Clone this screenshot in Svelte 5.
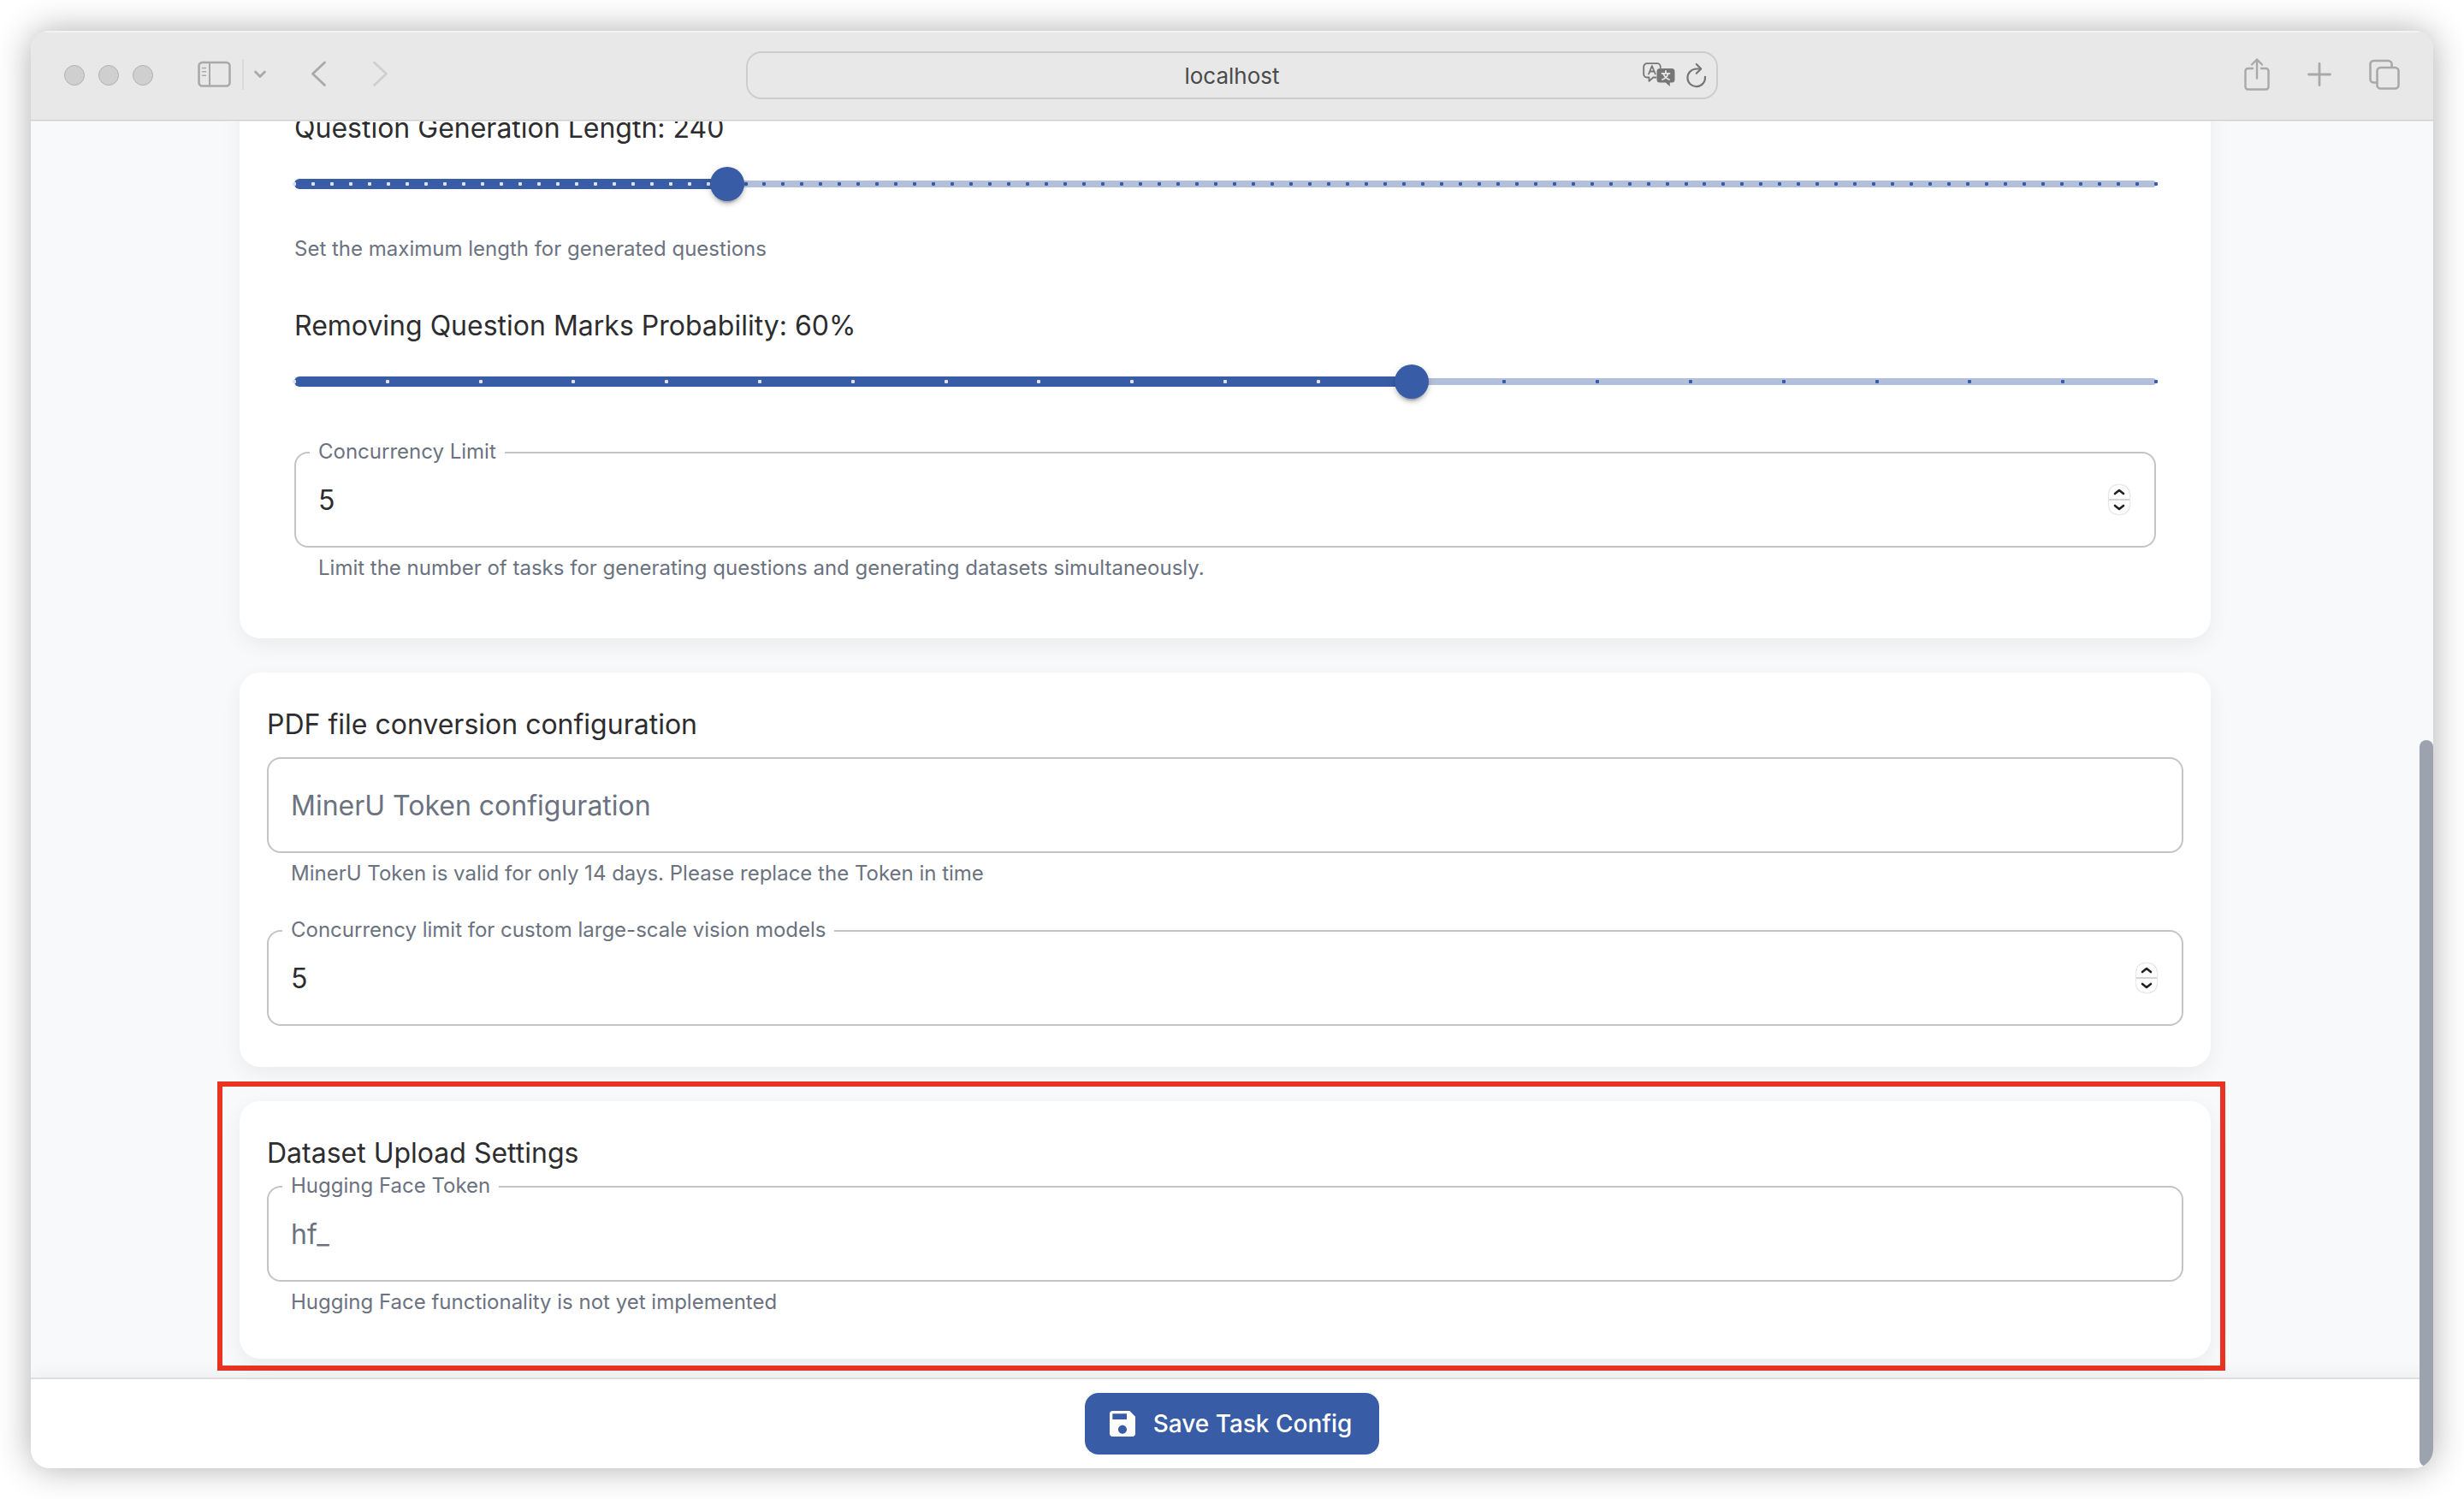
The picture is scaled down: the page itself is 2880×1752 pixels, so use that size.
<script lang="ts">
  type Mark = { at: number; active: boolean };

  let questionLength: number = 240;
  let maskProbability: number = 60;
  let concurrencyLimit: number = 5;
  let visionConcurrencyLimit: number = 5;
  let minerUToken: string = "";
  let huggingfaceToken: string = "";

  // Position of a value on its slider, in percent
  function percent(value: number, min: number, max: number) {
    return ((value - min) / (max - min)) * 100;
  }

  // One mark for every step of the slider
  function buildMarks(value: number, min: number, max: number, step: number) {
    const marks: Mark[] = [];
    for (let v = min; v <= max; v += step) {
      marks.push({ at: percent(v, min, max), active: v <= value });
    }
    return marks;
  }

  $: sliders = [
    {
      id: "question-length",
      title: `Question Generation Length: ${questionLength}`,
      value: questionLength,
      min: 10,
      max: 1000,
      step: 10,
      help: "Set the maximum length for generated questions",
      update: (v: number) => (questionLength = v),
    },
    {
      id: "mask-probability",
      title: `Removing Question Marks Probability: ${maskProbability}%`,
      value: maskProbability,
      min: 0,
      max: 100,
      step: 5,
      help: "",
      update: (v: number) => (maskProbability = v),
    },
  ];
</script>

<div class="desktop">
  <div class="window">
    <!-- Browser Toolbar -->
    <header class="toolbar">
      <div class="toolbar-left">
        <div class="lights">
          <span></span>
          <span></span>
          <span></span>
        </div>
        <div class="sidebar-group">
          <button class="tool" aria-label="Show sidebar">
            <svg width="40" height="32" viewBox="0 0 40 32" fill="none" stroke="currentColor">
              <rect x="1.5" y="2" width="36" height="27.5" rx="4" stroke-width="2.6" />
              <path d="M14 2v27.500" stroke-width="2" />
              <path d="M5.500 8.500h4M5.500 12.800h4M5.500 17.200h4" stroke-width="1.600" stroke-linecap="round" />
            </svg>
          </button>
          <span class="divider"></span>
          <button class="tool" aria-label="Sidebar options">
            <svg width="14" height="12" viewBox="0 0 14 12" fill="none" stroke="currentColor" stroke-width="2.800" stroke-linecap="round" stroke-linejoin="round">
              <path d="M1.600 3l5.400 5.500L12.400 3" />
            </svg>
          </button>
        </div>
        <div class="history">
          <button class="tool" aria-label="Back">
            <svg width="20" height="32" viewBox="0 0 20 32" fill="none" stroke="currentColor" stroke-width="2.800" stroke-linecap="round" stroke-linejoin="round">
              <path d="M16.500 2L2.500 15.200l14 13.200" />
            </svg>
          </button>
          <button class="tool disabled" aria-label="Forward" disabled>
            <svg width="20" height="32" viewBox="0 0 20 32" fill="none" stroke="currentColor" stroke-width="2.800" stroke-linecap="round" stroke-linejoin="round">
              <path d="M2.500 2l14 13.200-14 13.200" />
            </svg>
          </button>
        </div>
      </div>

      <div class="address">
        <input type="text" value="localhost" aria-label="Address" />
        <div class="address-actions">
          <button class="tool dark" aria-label="Translate">
            <svg width="38" height="30" viewBox="0 0 38 30" fill="none" stroke="currentColor" stroke-width="1.800" stroke-linecap="round" stroke-linejoin="round">
              <path d="M15.500 17.500h-3.200L7.500 21.800v-4.300H5a3.800 3.800 0 0 1-3.800-3.800V5A3.800 3.800 0 0 1 5 1.200h12A3.800 3.800 0 0 1 20.800 5v1" />
              <path d="M7 13.500L10.900 4l3.900 9.500M8.300 10.500h5.200" />
              <path d="M20 7h14a3.500 3.500 0 0 1 3.500 3.500V20a3.500 3.500 0 0 1-3.500 3.500h-2.200V28l-5-4.500H20a3.500 3.500 0 0 1-3.500-3.500v-9.500A3.500 3.500 0 0 1 20 7z" fill="currentColor" stroke="none" />
              <path d="M27 9.800v2M22.500 12.800h9M24.200 13.200c1.200 3.200 3.500 5.400 6.800 6.800M29.800 13.200c-1.200 3.200-3.500 5.400-6.800 6.800" stroke="#e8e8e8" stroke-width="1.800" />
            </svg>
          </button>
          <button class="tool dark" aria-label="Reload">
            <svg width="24" height="30" viewBox="0 0 24 30" fill="none" stroke="currentColor" stroke-width="2.200" stroke-linecap="round" stroke-linejoin="round">
              <path d="M22 16.800A10.300 10.300 0 1 1 11.700 7.500H17" />
              <path d="M11.800 2l5.400 5.500-5.400 5.200" />
            </svg>
          </button>
        </div>
      </div>

      <div class="toolbar-right">
        <button class="tool" aria-label="Share">
          <svg width="30" height="40" viewBox="0 0 30 40" fill="none" stroke="currentColor" stroke-width="2.400" stroke-linecap="round" stroke-linejoin="round">
            <path d="M10 13H4.500A3 3 0 0 0 1.500 16v18.500a3 3 0 0 0 3 3h21a3 3 0 0 0 3-3V16a3 3 0 0 0-3-3H20" />
            <path d="M15 24.500V2.500M9 8.500l6-6 6 6" />
          </svg>
        </button>
        <button class="tool" aria-label="New tab">
          <svg width="28" height="28" viewBox="0 0 28 28" fill="none" stroke="currentColor" stroke-width="2.800" stroke-linecap="round">
            <path d="M14 1.500v25M1.500 14h25" />
          </svg>
        </button>
        <button class="tool" aria-label="Tab overview">
          <svg width="36" height="36" viewBox="0 0 36 36" fill="none" stroke="currentColor" stroke-width="2.600" stroke-linejoin="round">
            <rect x="9.500" y="10" width="25" height="24.500" rx="4" />
            <path d="M9.500 27.500H5.500a4 4 0 0 1-4-4V6a4 4 0 0 1 4-4h17a4 4 0 0 1 4 4v4" />
          </svg>
        </button>
      </div>
    </header>

    <!-- Task Settings -->
    <main class="page">
      <div class="container">
        <section class="card split">
          {#each sliders as s (s.id)}
            <div class="setting">
              <label class="slider-title" for={s.id}>{s.title}</label>
              <div class="slider">
                <div class="rail"></div>
                <div class="track" style="width: {percent(s.value, s.min, s.max)}%"></div>
                {#each buildMarks(s.value, s.min, s.max, s.step) as mark}
                  <span class="mark" class:active={mark.active} style="left: {mark.at}%"></span>
                {/each}
                <input
                  id={s.id}
                  type="range"
                  min={s.min}
                  max={s.max}
                  step={s.step}
                  value={s.value}
                  on:input={(e) => s.update(Number(e.currentTarget.value))}
                />
              </div>
              {#if s.help}
                <p class="help slider-help">{s.help}</p>
              {/if}
            </div>
          {/each}

          <div class="field">
            <div class="outline">
              <label for="concurrency">Concurrency Limit</label>
              <input id="concurrency" type="number" bind:value={concurrencyLimit} />
              <div class="stepper">
                <button aria-label="Increase" on:click={() => (concurrencyLimit += 1)}>
                  <svg width="14" height="8" viewBox="0 0 14 8"><path d="M2 6l5-4 5 4" /></svg>
                </button>
                <button aria-label="Decrease" on:click={() => (concurrencyLimit -= 1)}>
                  <svg width="14" height="8" viewBox="0 0 14 8"><path d="M2 2l5 4 5-4" /></svg>
                </button>
              </div>
            </div>
            <p class="help">
              Limit the number of tasks for generating questions and generating datasets simultaneously.
            </p>
          </div>
        </section>

        <section class="card">
          <h2>PDF file conversion configuration</h2>
          <div class="field">
            <div class="outline">
              <input
                type="text"
                placeholder="MinerU Token configuration"
                aria-label="MinerU Token configuration"
                bind:value={minerUToken}
              />
            </div>
            <p class="help">MinerU Token is valid for only 14 days. Please replace the Token in time</p>
          </div>
          <div class="field">
            <div class="outline">
              <label for="vision-concurrency">Concurrency limit for custom large-scale vision models</label>
              <input id="vision-concurrency" type="number" bind:value={visionConcurrencyLimit} />
              <div class="stepper">
                <button aria-label="Increase" on:click={() => (visionConcurrencyLimit += 1)}>
                  <svg width="14" height="8" viewBox="0 0 14 8"><path d="M2 6l5-4 5 4" /></svg>
                </button>
                <button aria-label="Decrease" on:click={() => (visionConcurrencyLimit -= 1)}>
                  <svg width="14" height="8" viewBox="0 0 14 8"><path d="M2 2l5 4 5-4" /></svg>
                </button>
              </div>
            </div>
          </div>
        </section>

        <section class="card">
          <h2>Dataset Upload Settings</h2>
          <div class="field">
            <div class="outline">
              <label for="hf-token">Hugging Face Token</label>
              <input id="hf-token" type="text" placeholder="hf_" bind:value={huggingfaceToken} />
            </div>
            <p class="help">Hugging Face functionality is not yet implemented</p>
          </div>
          <div class="highlight"></div>
        </section>
      </div>
    </main>

    <!-- Save Bar -->
    <footer class="save-bar">
      <button class="save">
        <svg width="40" height="40" viewBox="0 0 24 24" fill="currentColor">
          <path d="M17 3H5c-1.110 0-2 .9-2 2v14c0 1.100.89 2 2 2h14c1.100 0 2-.9 2-2V7zm-5 16c-1.660 0-3-1.340-3-3s1.340-3 3-3 3 1.340 3 3-1.340 3-3 3m3-10H5V5h10z" />
        </svg>
        Save Task Config
      </button>
    </footer>

    <div class="scrollbar"><div class="scroll-thumb"></div></div>
  </div>
</div>

<style>
  :global(body) {
    margin: 0;
    background: #fff;
  }

  .desktop,
  .desktop * {
    box-sizing: border-box;
  }

  .desktop {
    height: 100vh;
    padding: 36px;
    font-family: Inter, "Liberation Sans", sans-serif;
    color: #2d2d2f;
  }

  .window {
    height: 100%;
    display: grid;
    grid-template-columns: minmax(0, 1fr) 16px;
    grid-template-rows: auto minmax(0, 1fr) auto;
    border-radius: 22px;
    overflow: hidden;
    background: #f8f9fb;
    box-shadow: 0 0 40px rgba(0, 0, 0, 0.32);
  }

  button {
    font-family: inherit;
    border: none;
    padding: 0;
    cursor: pointer;
  }

  svg {
    display: block;
  }

  /* Toolbar */
  .toolbar {
    grid-column: 1 / 3;
    grid-row: 1;
    z-index: 2;
    display: grid;
    grid-template-columns: 1fr minmax(400px, 1136px) 1fr;
    align-items: center;
    padding: 24px 39px;
    background: #e8e8e8;
    border-bottom: 1px solid #cfcfcf;
    box-shadow: inset 0 2px 0 #f3f3f3, 0 1px 0 #e9e9ea;
  }

  .toolbar-left,
  .toolbar-right,
  .lights,
  .sidebar-group,
  .history,
  .address-actions {
    display: flex;
    align-items: center;
  }

  .toolbar-left {
    gap: 52px;
  }

  .toolbar-right {
    justify-content: flex-end;
    gap: 44px;
  }

  .sidebar-group,
  .history,
  .toolbar-right {
    padding-bottom: 2px;
  }

  .lights {
    gap: 16px;
  }

  .lights span {
    width: 24px;
    height: 24px;
    border-radius: 50%;
    background: #cfcfcf;
    border: 1px solid #b2b2b2;
  }

  .sidebar-group {
    gap: 12px;
  }

  .history {
    gap: 52px;
  }

  .divider {
    width: 2px;
    height: 36px;
    background: #dadada;
  }

  .tool {
    background: none;
    color: #a9a9a9;
  }

  .tool.disabled {
    color: #cfcfcf;
  }

  .tool.dark {
    color: #767676;
  }

  .address {
    display: grid;
    grid-template-columns: 88px 1fr 88px;
    align-items: center;
    height: 56px;
    border: 2px solid #cdcdcd;
    border-radius: 18px;
  }

  .address input {
    grid-column: 2;
    min-width: 0;
    border: none;
    outline: none;
    background: none;
    text-align: center;
    font-family: inherit;
    font-size: 26px;
    color: #4a4a4a;
  }

  .address-actions {
    justify-content: flex-end;
    gap: 13px;
    padding-right: 11px;
  }

  /* Page */
  .page {
    grid-column: 1;
    grid-row: 2;
    display: flex;
    flex-direction: column;
    justify-content: flex-end;
    align-items: center;
    overflow: hidden;
    padding: 0 48px 22px;
  }

  .container {
    width: 100%;
    max-width: 2304px;
    flex-shrink: 0;
    display: flex;
    flex-direction: column;
    gap: 40px;
  }

  .card {
    position: relative;
    padding: 32px 32px 48px;
    background: #fff;
    border-radius: 24px;
    box-shadow: 0 8px 24px rgba(0, 0, 0, 0.06);
  }

  .card.split {
    padding: 64px;
  }

  h2 {
    margin: 0 0 9px;
    font-size: 32px;
    font-weight: 400;
    line-height: 58px;
  }

  .setting {
    display: flex;
    flex-direction: column;
    margin-bottom: 48px;
  }

  .setting + .field {
    padding-top: 4px;
  }

  .slider-title {
    margin-bottom: 11px;
    font-size: 32px;
    line-height: 48px;
  }

  .slider {
    position: relative;
    display: flex;
    align-items: center;
    height: 60px;
  }

  .rail,
  .track {
    position: absolute;
    left: 0;
    border-radius: 6px;
  }

  .rail {
    width: 100%;
    height: 8px;
    background: #b3c0dc;
  }

  .track {
    height: 12px;
    background: #385ca5;
  }

  .mark {
    position: absolute;
    width: 4px;
    height: 4px;
    margin-left: -2px;
    border-radius: 1px;
    background: #385ca5;
  }

  .mark.active {
    background: #dde3f0;
  }

  /* Wider than the rail by one thumb, so the thumb is centred on its value */
  .slider input {
    position: relative;
    flex: 1;
    height: 40px;
    margin: 0 -20px;
    background: none;
    appearance: none;
  }

  .slider input::-webkit-slider-thumb {
    appearance: none;
    width: 40px;
    height: 40px;
    border-radius: 50%;
    background: #385ca5;
    box-shadow:
      0 6px 2px -4px rgba(0, 0, 0, 0.2),
      0 4px 4px rgba(0, 0, 0, 0.14),
      0 2px 10px rgba(0, 0, 0, 0.12);
  }

  .help {
    margin: 6px 28px 0;
    font-size: 24px;
    line-height: 36px;
    color: #6b7280;
  }

  .slider-help {
    margin: 28px 0 0;
  }

  .field + .field {
    margin-top: 48px;
  }

  .outline {
    position: relative;
    display: flex;
    align-items: center;
    height: 112px;
    padding: 0 29px 0 26px;
    border: 2px solid #c4c4c4;
    border-radius: 16px;
  }

  .outline label {
    position: absolute;
    top: -20px;
    left: 16px;
    padding: 0 10px;
    background: #fff;
    font-size: 24px;
    line-height: 36px;
    color: #6b7280;
  }

  .outline input {
    flex: 1;
    min-width: 0;
    padding: 0;
    border: none;
    outline: none;
    background: none;
    font-family: inherit;
    font-size: 32px;
    color: inherit;
    appearance: textfield;
  }

  .outline input::placeholder {
    color: #6b7280;
    opacity: 1;
  }

  .outline input::-webkit-inner-spin-button {
    appearance: none;
    margin: 0;
  }

  .stepper {
    display: flex;
    flex-direction: column;
    width: 24px;
    height: 34px;
    border-radius: 10px;
    background: #fff;
    box-shadow: 0 0 2px rgba(0, 0, 0, 0.35);
  }

  .stepper button {
    flex: 1;
    display: flex;
    align-items: center;
    justify-content: center;
    background: none;
  }

  .stepper button:first-child {
    border-bottom: 2px solid #d6d6d6;
  }

  .stepper path {
    fill: none;
    stroke: #222;
    stroke-width: 2.6;
    stroke-linecap: round;
    stroke-linejoin: round;
  }

  .highlight {
    position: absolute;
    top: -23px;
    right: -17px;
    bottom: -14px;
    left: -26px;
    border: 6px solid #ea3323;
    pointer-events: none;
  }

  /* Save bar */
  .save-bar {
    grid-column: 1 / 3;
    grid-row: 3;
    z-index: 1;
    display: flex;
    justify-content: center;
    padding: 16px 0;
    background: #fff;
    border-top: 2px solid #dedede;
    box-shadow: 0 -4px 20px rgba(0, 0, 0, 0.05);
  }

  .save {
    display: flex;
    align-items: center;
    gap: 16px;
    height: 72px;
    padding: 0 32px 0 24px;
    border-radius: 16px;
    background: #385ca5;
    color: #fff;
    font-size: 28px;
    font-weight: 500;
  }

  .scrollbar {
    grid-column: 2;
    grid-row: 2 / 4;
    z-index: 1;
    display: flex;
    flex-direction: column;
    justify-content: flex-end;
    padding-bottom: 2px;
  }

  .scroll-thumb {
    height: 54%;
    border-radius: 8px;
    background: #9ca3af;
  }
</style>
